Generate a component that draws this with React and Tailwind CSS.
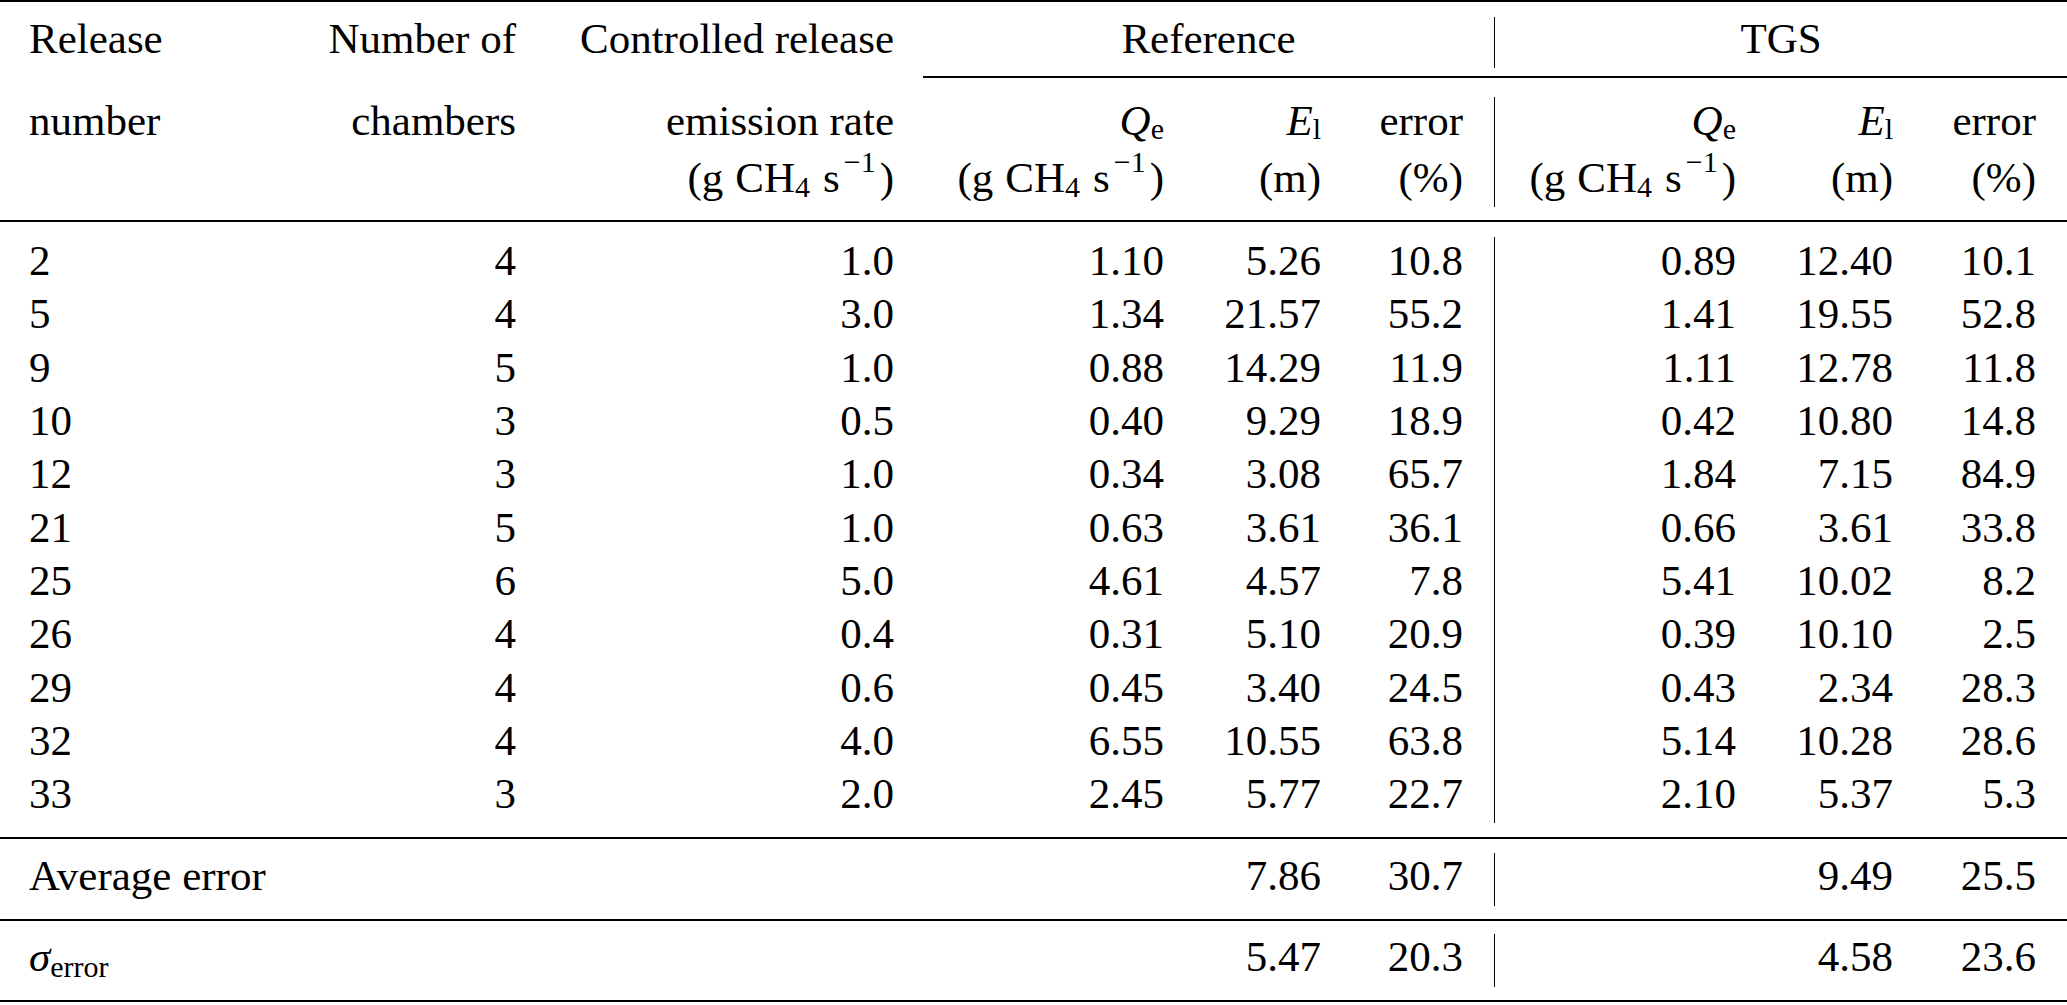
import React from 'react'

const serif = "font-['Liberation_Serif','Times_New_Roman',serif]"

const rows = [
  ['2', '4', '1.0', '1.10', '5.26', '10.8', '0.89', '12.40', '10.1'],
  ['5', '4', '3.0', '1.34', '21.57', '55.2', '1.41', '19.55', '52.8'],
  ['9', '5', '1.0', '0.88', '14.29', '11.9', '1.11', '12.78', '11.8'],
  ['10', '3', '0.5', '0.40', '9.29', '18.9', '0.42', '10.80', '14.8'],
  ['12', '3', '1.0', '0.34', '3.08', '65.7', '1.84', '7.15', '84.9'],
  ['21', '5', '1.0', '0.63', '3.61', '36.1', '0.66', '3.61', '33.8'],
  ['25', '6', '5.0', '4.61', '4.57', '7.8', '5.41', '10.02', '8.2'],
  ['26', '4', '0.4', '0.31', '5.10', '20.9', '0.39', '10.10', '2.5'],
  ['29', '4', '0.6', '0.45', '3.40', '24.5', '0.43', '2.34', '28.3'],
  ['32', '4', '4.0', '6.55', '10.55', '63.8', '5.14', '10.28', '28.6'],
  ['33', '3', '2.0', '2.45', '5.77', '22.7', '2.10', '5.37', '5.3'],
]

function Unit() {
  return (
    <span>
      (g<span className="ml-[12px]">CH</span>
      <span className="text-[30px] leading-[0] align-[-5px]">4</span>
      <span className="ml-[13px]">s</span>
      <span className="ml-[4px] text-[30px] leading-[0] align-[20px]">−1</span>
      <span className="ml-[4px]">)</span>
    </span>
  )
}

function Q() {
  return (
    <span>
      <i>Q</i>
      <span className="text-[30px] leading-[0] align-[-4px]">e</span>
    </span>
  )
}

function E() {
  return (
    <span>
      <i>E</i>
      <span className="text-[30px] leading-[0] align-[-4px]">l</span>
    </span>
  )
}

function Rule() {
  return (
    <tr>
      <td colSpan={10} className="p-0 h-[2px] bg-black" />
    </tr>
  )
}

function Divider({ top, height, rowSpan = 1 }) {
  return (
    <td rowSpan={rowSpan} className="p-0 align-top">
      <div className="w-px bg-black" style={{ marginTop: top, height }} />
    </td>
  )
}

const cell = 'p-0 align-top whitespace-nowrap text-right'

export default function App() {
  return (
    <div className="w-[2067px] bg-white">
      <table className={`w-[2067px] table-fixed border-collapse text-[43px] text-black ${serif}`}>
        <colgroup>
          <col className="w-[300px]" />
          <col className="w-[216px]" />
          <col className="w-[378px]" />
          <col className="w-[270px]" />
          <col className="w-[157px]" />
          <col className="w-[173px]" />
          <col className="w-[1px]" />
          <col className="w-[241px]" />
          <col className="w-[157px]" />
          <col className="w-[174px]" />
        </colgroup>
        <thead>
          <Rule />
          <tr className="leading-[46px]">
            <td className="p-0 pt-[14px] pb-[14px] pl-[29px] align-top whitespace-nowrap text-left">Release</td>
            <td className={`${cell} pt-[14px] pb-[14px]`}>Number of</td>
            <td className={`${cell} pt-[14px] pb-[14px]`}>Controlled release</td>
            <td colSpan={3} className="p-0 pt-[14px] pb-[14px] pl-[29px] align-top text-center">Reference</td>
            <Divider top={15} height={51} />
            <td colSpan={3} className="p-0 pt-[14px] pb-[14px] align-top text-center">TGS</td>
          </tr>
          <tr>
            <td colSpan={3} className="p-0 h-[2px]" />
            <td colSpan={7} className="p-0 h-[2px]">
              <div className="ml-[29px] h-[2px] bg-black" />
            </td>
          </tr>
          <tr className="leading-[57px]">
            <td className="p-0 pt-[14px] pb-[14px] pl-[29px] align-top text-left">number</td>
            <td className={`${cell} pt-[14px] pb-[14px]`}>chambers</td>
            <td className={`${cell} pt-[14px] pb-[14px]`}>
              emission rate
              <br />
              <Unit />
            </td>
            <td className={`${cell} pt-[14px] pb-[14px]`}>
              <Q />
              <br />
              <Unit />
            </td>
            <td className={`${cell} pt-[14px] pb-[14px]`}>
              <E />
              <br />
              (m)
            </td>
            <td className={`${cell} pt-[14px] pb-[14px] pr-[31px]`}>
              error
              <br />
              (%)
            </td>
            <Divider top={19} height={110} />
            <td className={`${cell} pt-[14px] pb-[14px]`}>
              <Q />
              <br />
              <Unit />
            </td>
            <td className={`${cell} pt-[14px] pb-[14px]`}>
              <E />
              <br />
              (m)
            </td>
            <td className={`${cell} pt-[14px] pb-[14px] pr-[31px]`}>
              error
              <br />
              (%)
            </td>
          </tr>
          <Rule />
        </thead>
        <tbody className="leading-[53.33px]">
          {rows.map((r, i) => {
            const pad = i === 0 ? 'pt-[12px]' : i === rows.length - 1 ? 'pb-[16px]' : ''
            return (
              <tr key={r[0]}>
                <td className={`p-0 pl-[29px] align-top text-left ${pad}`}>{r[0]}</td>
                <td className={`${cell} ${pad}`}>{r[1]}</td>
                <td className={`${cell} ${pad}`}>{r[2]}</td>
                <td className={`${cell} ${pad}`}>{r[3]}</td>
                <td className={`${cell} ${pad}`}>{r[4]}</td>
                <td className={`${cell} ${pad} pr-[31px]`}>{r[5]}</td>
                {i === 0 && <Divider top={15} height={586} rowSpan={rows.length} />}
                <td className={`${cell} ${pad}`}>{r[6]}</td>
                <td className={`${cell} ${pad}`}>{r[7]}</td>
                <td className={`${cell} ${pad} pr-[31px]`}>{r[8]}</td>
              </tr>
            )
          })}
          <Rule />
          <tr>
            <td colSpan={4} className="p-0 pt-[10px] pb-[17.5px] pl-[29px] align-top text-left">Average error</td>
            <td className={`${cell} pt-[10px] pb-[17.5px]`}>7.86</td>
            <td className={`${cell} pt-[10px] pb-[17.5px] pr-[31px]`}>30.7</td>
            <Divider top={14} height={53} />
            <td className={`${cell} pt-[10px] pb-[17.5px]`} />
            <td className={`${cell} pt-[10px] pb-[17.5px]`}>9.49</td>
            <td className={`${cell} pt-[10px] pb-[17.5px] pr-[31px]`}>25.5</td>
          </tr>
          <Rule />
          <tr>
            <td colSpan={4} className="p-0 pt-[9px] pb-[16.5px] pl-[29px] align-top text-left">
              <i>σ</i>
              <span className="text-[30px] leading-[0] align-[-6px]">error</span>
            </td>
            <td className={`${cell} pt-[9px] pb-[16.5px]`}>5.47</td>
            <td className={`${cell} pt-[9px] pb-[16.5px] pr-[31px]`}>20.3</td>
            <Divider top={13} height={53} />
            <td className={`${cell} pt-[9px] pb-[16.5px]`} />
            <td className={`${cell} pt-[9px] pb-[16.5px]`}>4.58</td>
            <td className={`${cell} pt-[9px] pb-[16.5px] pr-[31px]`}>23.6</td>
          </tr>
          <Rule />
        </tbody>
      </table>
    </div>
  )
}
